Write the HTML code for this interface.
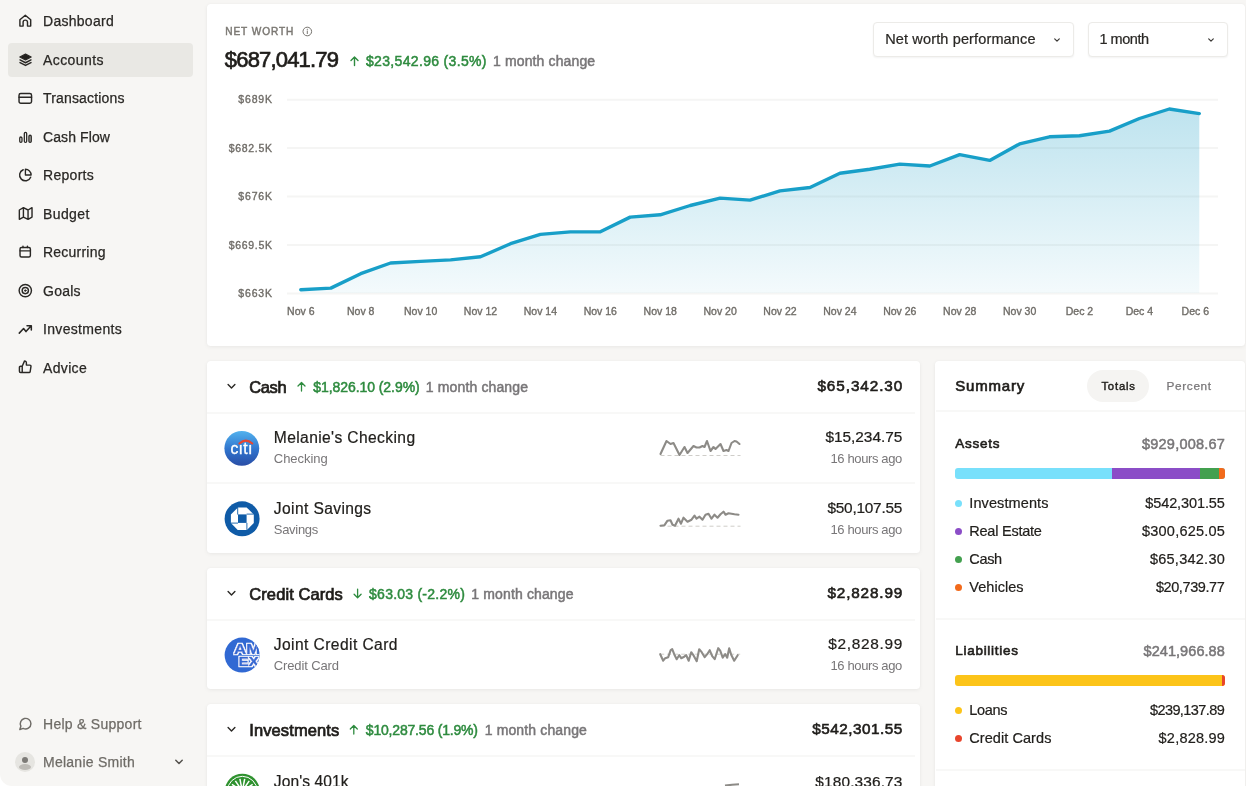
<!DOCTYPE html>
<html lang="en">
<head>
<meta charset="utf-8">
<title>Accounts</title>
<style>
*{box-sizing:border-box;margin:0;padding:0}
html,body{width:1246px;height:786px;overflow:hidden;background:#fff}
body{font-family:"Liberation Sans",Arial,sans-serif;color:#22201d;position:relative}
#app{will-change:transform;position:absolute;left:0;top:0;width:1246px;height:786px;background:#f7f6f4;border-bottom-left-radius:12px;overflow:hidden}
.t{position:absolute;white-space:nowrap;line-height:20px}
.m{-webkit-text-stroke:0.35px currentColor}
.card{position:absolute;background:#fff;border-radius:3.5px;box-shadow:0 1px 4px rgba(0,0,0,.06),0 0 1px rgba(0,0,0,.05)}
.nav{position:absolute;left:43px;font-size:14px;letter-spacing:.25px;line-height:20px;color:#2a2825;white-space:nowrap;-webkit-text-stroke:0.3px currentColor}
.ico{position:absolute;left:17px;width:17px;height:17px}
.ico svg{display:block;overflow:visible;width:17px;height:17px;fill:none;stroke:#2a2825;stroke-width:1.5;stroke-linecap:round;stroke-linejoin:round}
.sel{position:absolute;left:8px;top:43px;width:185px;height:34px;background:#e9e8e4;border-radius:4px}
.hr{position:absolute;height:2px;background:#f8f8f7}
.g{color:#2e8b3f}
.gr{color:#787678}
.r{text-align:right}
.ax{font-family:"Liberation Sans",Arial,sans-serif;font-size:10.5px;fill:#6f6c67;stroke:#6f6c67;stroke-width:.35px}
</style>
</head>
<body>
<div id="app">

<!-- SIDEBAR -->
<div class="sel"></div>
<div class="ico" style="top:12px;left:16px"><svg viewBox="-0.75 -0.19 16 16"><g transform="translate(8 8) scale(0.94) translate(-8 -8)" stroke-width="1.44"><path d="M2.6 7.1 8 2.6l5.4 4.5v6.3h-3.2V9.6a2.2 2.2 0 0 0-4.4 0v3.8H2.6z"/></g></svg></div>
<div class="t " style="top:11.4px;font-size:14px;line-height:20px;left:43px;letter-spacing:0.276px;color:#2a2825;-webkit-text-stroke:0.25px currentColor;">Dashboard</div>
<div class="ico" style="top:51px;left:17px"><svg viewBox="-0.00 -0.28 16 16"><g transform="translate(8 8) scale(0.92) translate(-8 -8)" stroke-width="1.47"><path d="M8 2.2 2.2 5.2 8 8.2l5.8-3z" fill="#22201d" stroke-width="1.2"/><path d="M2.4 8.1 8 11l5.6-2.9M2.4 10.9 8 13.8l5.6-2.9" stroke-width="1.5"/></g></svg></div>
<div class="t " style="top:49.9px;font-size:14px;line-height:20px;left:43px;letter-spacing:0.416px;color:#2a2825;-webkit-text-stroke:0.25px currentColor;">Accounts</div>
<div class="ico" style="top:89px;left:16px"><svg viewBox="-0.75 -0.75 16 16"><g transform="translate(8 8) scale(0.92) translate(-8 -8)" stroke-width="1.47"><rect x="1.6" y="3" width="12.8" height="10" rx="1.8"/><path d="M1.6 6.9h12.8"/></g></svg></div>
<div class="t " style="top:88.4px;font-size:14px;line-height:20px;left:43px;letter-spacing:0.161px;color:#2a2825;-webkit-text-stroke:0.25px currentColor;">Transactions</div>
<div class="ico" style="top:128px;left:17px"><svg viewBox="-0.00 -0.38 16 16"><g transform="translate(8 8) scale(0.92) translate(-8 -8)" stroke-width="1.47"><rect x="2.1" y="8.1" width="2.3" height="5.6" rx="1.15" stroke-width="1.3"/><rect x="6.8" y="3.3" width="2.4" height="10.4" rx="1.2" stroke-width="1.3"/><rect x="11.5" y="6.3" width="2.4" height="7.4" rx="1.2" stroke-width="1.3" fill="#b9b7b3"/></g></svg></div>
<div class="t " style="top:126.9px;font-size:14px;line-height:20px;left:43px;letter-spacing:0.096px;color:#2a2825;-webkit-text-stroke:0.25px currentColor;">Cash Flow</div>
<div class="ico" style="top:166px;left:16px"><svg viewBox="-0.85 -0.47 16 16"><g transform="translate(8 8) scale(0.9) translate(-8 -8)" stroke-width="1.50"><path d="M13.5 10.3A6 6 0 1 1 5.7 2.5"/><path d="M14 8A6 6 0 0 0 8 2v6z" stroke-width="1.4"/></g></svg></div>
<div class="t " style="top:165.4px;font-size:14px;line-height:20px;left:43px;letter-spacing:0.297px;color:#2a2825;-webkit-text-stroke:0.25px currentColor;">Reports</div>
<div class="ico" style="top:205px;left:16px"><svg viewBox="-0.85 -0.00 16 16"><g transform="translate(8 8) scale(0.89) translate(-8 -8)" stroke-width="1.52"><path d="M1.6 4.3v9.9l4.3-2.4 4.9 2.4 4.2-2.4V1.9l-4.2 2.4-4.9-2.4zM5.9 1.9v9.9M10.8 4.3v9.9" stroke-width="1.5"/></g></svg></div>
<div class="t " style="top:203.9px;font-size:14px;line-height:20px;left:43px;letter-spacing:0.386px;color:#2a2825;-webkit-text-stroke:0.25px currentColor;">Budget</div>
<div class="ico" style="top:243px;left:16px"><svg viewBox="-0.66 -0.28 16 16"><g transform="translate(8 8) scale(0.87) translate(-8 -8)" stroke-width="1.55"><rect x="2.4" y="3.3" width="11.2" height="10.4" rx="1.6"/><path d="M2.4 7h11.2M5.6 1.9v1.4M10.4 1.9v1.4"/></g></svg></div>
<div class="t " style="top:242.4px;font-size:14px;line-height:20px;left:43px;letter-spacing:0.226px;color:#2a2825;-webkit-text-stroke:0.25px currentColor;">Recurring</div>
<div class="ico" style="top:282px;left:16px"><svg viewBox="-0.75 -0.09 16 16"><g transform="translate(8 8) scale(0.95) translate(-8 -8)" stroke-width="1.42"><circle cx="8" cy="8" r="6.1"/><circle cx="8" cy="8" r="3.1"/><circle cx="8" cy="8" r=".8" fill="#22201d" stroke-width=".8"/></g></svg></div>
<div class="t " style="top:280.9px;font-size:14px;line-height:20px;left:43px;letter-spacing:0.257px;color:#2a2825;-webkit-text-stroke:0.25px currentColor;">Goals</div>
<div class="ico" style="top:320px;left:16px"><svg viewBox="-0.75 -0.56 16 16"><g transform="translate(8 8) scale(0.9) translate(-8 -8)" stroke-width="1.50"><path d="M1.7 12.2 6.2 7.4l2.5 3.2 5.5-6M9.8 4.5h4.5v4.5" stroke-width="1.6"/></g></svg></div>
<div class="t " style="top:319.4px;font-size:14px;line-height:20px;left:43px;letter-spacing:0.332px;color:#2a2825;-webkit-text-stroke:0.25px currentColor;">Investments</div>
<div class="ico" style="top:358px;left:16px"><svg viewBox="-0.66 -0.56 16 16"><g transform="translate(8 8) scale(0.85) translate(-8 -8)" stroke-width="1.59"><path d="M9.3 6V3.3a2 2 0 0 0-2-2L4.7 7.3v6.9h7.5a1.3 1.3 0 0 0 1.3-1.1l.9-5.6a1.3 1.3 0 0 0-1.3-1.5zM4.7 14.2H2.9a1.3 1.3 0 0 1-1.3-1.3V8.6a1.3 1.3 0 0 1 1.3-1.3h1.8" transform="translate(0 -.2)"/></g></svg></div>
<div class="t " style="top:357.9px;font-size:14px;line-height:20px;left:43px;letter-spacing:0.336px;color:#2a2825;-webkit-text-stroke:0.25px currentColor;">Advice</div>
<div class="ico" style="top:715px;left:17px"><svg viewBox="-0.00 -0.47 16 16" style="stroke:#6f6c67"><path d="M13.1 7.7a5 5 0 0 1-7.3 4.45L2.7 13.1l.95-3.1A5 5 0 1 1 13.1 7.7z" stroke-width="1.4"/></svg></div>
<div class="t " style="top:714px;font-size:14px;line-height:20px;left:43px;letter-spacing:0.273px;color:#6f6c67;-webkit-text-stroke:0.25px currentColor;">Help &amp; Support</div>
<div style="position:absolute;left:15px;top:752px;width:20px;height:20px;border-radius:50%;background:#e6e5e1;overflow:hidden"><div style="position:absolute;left:7px;top:4.5px;width:6px;height:6px;border-radius:50%;background:#7d7b77"></div><div style="position:absolute;left:4px;top:12px;width:12px;height:6px;border-radius:50%;background:#bdbbb6"></div></div>
<div class="t " style="top:752px;font-size:14px;line-height:20px;left:43px;letter-spacing:0.25px;color:#6f6c67;-webkit-text-stroke:0.25px currentColor;">Melanie Smith</div>
<svg style="position:absolute;left:173px;top:757px;overflow:visible" width="12" height="10" viewBox="-0.00 -0.00 12 10" fill="none" stroke="#55524e" stroke-width="1.5" stroke-linecap="round" stroke-linejoin="round"><path d="M2.8 3.3 6 6.5 9.2 3.3"/></svg>

<!-- TOP CARD -->
<div class="card" style="left:207px;top:4px;width:1038px;height:342px"></div>
<div class="t " style="top:22px;font-size:10.1px;line-height:20px;left:225.3px;letter-spacing:0.902px;color:#7b7873;-webkit-text-stroke:0.45px currentColor;">NET WORTH</div>
<svg style="position:absolute;left:301px;top:26px;overflow:visible" width="11" height="11" viewBox="-0.80 -0.00 11 11" fill="none" stroke="#77746f" stroke-width="1"><circle cx="5.5" cy="5.5" r="4.3"/><path d="M5.5 5v2.6" stroke-linecap="round"/><circle cx="5.5" cy="3.4" r=".4" fill="#77746f" stroke-width=".5"/></svg>
<div class="t " style="top:47.6px;font-size:22px;line-height:24px;left:224.8px;letter-spacing:-0.814px;color:#1f1d1a;-webkit-text-stroke:0.7px currentColor;">$687,041.79</div>
<svg style="position:absolute;left:348px;top:54px;overflow:visible" width="12" height="14" viewBox="-0.50 -0.00 12 14" fill="none" stroke="#2e8b3f" stroke-width="1.4" stroke-linecap="round" stroke-linejoin="round"><path d="M6 11.6V3M2.5 6.5 6 3 9.5 6.5"/></svg>
<div class="t " style="top:51px;font-size:14px;line-height:20px;left:366px;letter-spacing:0.332px;color:#2e8b3f;-webkit-text-stroke:0.5px currentColor;">$23,542.96 (3.5%)</div>
<div class="t " style="top:51px;font-size:14px;line-height:20px;left:493px;letter-spacing:0.13px;color:#787678;-webkit-text-stroke:0.5px currentColor;">1 month change</div>
<div style="position:absolute;left:873px;top:22px;width:201px;height:35px;border:1px solid #ecebe8;border-radius:4px;background:#fff;box-shadow:0 1px 2px rgba(0,0,0,.05)"></div>
<div class="t " style="top:29.3px;font-size:14.5px;line-height:20px;left:885.2px;letter-spacing:0.141px;color:#2a2825;-webkit-text-stroke:0.22px currentColor;">Net worth performance</div>
<svg style="position:absolute;left:1052px;top:35px;overflow:visible" width="10" height="10" viewBox="-0.00 -0.00 10 10" fill="none" stroke="#3a3835" stroke-width="1.2" stroke-linecap="round" stroke-linejoin="round"><path d="M2.7 3.9 5 6.2l2.3-2.3"/></svg>
<div style="position:absolute;left:1088px;top:22px;width:140px;height:35px;border:1px solid #ecebe8;border-radius:4px;background:#fff;box-shadow:0 1px 2px rgba(0,0,0,.05)"></div>
<div class="t " style="top:29.3px;font-size:14.5px;line-height:20px;left:1099.4px;letter-spacing:-0.449px;color:#2a2825;-webkit-text-stroke:0.22px currentColor;">1 month</div>
<svg style="position:absolute;left:1206px;top:35px;overflow:visible" width="10" height="10" viewBox="-0.00 -0.00 10 10" fill="none" stroke="#3a3835" stroke-width="1.2" stroke-linecap="round" stroke-linejoin="round"><path d="M2.7 3.9 5 6.2l2.3-2.3"/></svg>
<svg style="position:absolute;left:0;top:0" width="1246" height="350" viewBox="0 0 1246 350"><defs><linearGradient id="ag" x1="0" y1="100" x2="0" y2="293" gradientUnits="userSpaceOnUse"><stop offset="0" stop-color="#1e9fc6" stop-opacity=".30"/><stop offset="1" stop-color="#1e9fc6" stop-opacity=".05"/></linearGradient></defs><path d="M287 99.7H1218" stroke="#f5f5f4" stroke-width="2"/><path d="M287 148.1H1218" stroke="#f5f5f4" stroke-width="2"/><path d="M287 196.6H1218" stroke="#f5f5f4" stroke-width="2"/><path d="M287 245.0H1218" stroke="#f5f5f4" stroke-width="2"/><path d="M287 293.5H1218" stroke="#f5f5f4" stroke-width="2"/><path d="M300.8 289.7 L330.8 288.1 L360.7 273.7 L390.6 263.0 L420.6 261.4 L450.6 259.9 L480.5 256.8 L510.5 243.7 L540.4 234.4 L570.4 231.9 L600.3 231.8 L630.2 217.1 L660.2 214.8 L690.2 205.5 L720.1 198.1 L750.0 200.1 L780.0 190.9 L810.0 187.5 L839.9 173.2 L869.8 169.3 L899.8 164.1 L929.8 166.0 L959.7 154.7 L989.7 160.4 L1019.6 143.9 L1049.5 136.8 L1079.5 135.7 L1109.5 131.1 L1139.4 118.5 L1169.3 109.0 L1199.3 113.6 L1199.3 293 L300.8 293 Z" fill="url(#ag)"/><path d="M300.8 289.7 L330.8 288.1 L360.7 273.7 L390.6 263.0 L420.6 261.4 L450.6 259.9 L480.5 256.8 L510.5 243.7 L540.4 234.4 L570.4 231.9 L600.3 231.8 L630.2 217.1 L660.2 214.8 L690.2 205.5 L720.1 198.1 L750.0 200.1 L780.0 190.9 L810.0 187.5 L839.9 173.2 L869.8 169.3 L899.8 164.1 L929.8 166.0 L959.7 154.7 L989.7 160.4 L1019.6 143.9 L1049.5 136.8 L1079.5 135.7 L1109.5 131.1 L1139.4 118.5 L1169.3 109.0 L1199.3 113.6" fill="none" stroke="#189fc8" stroke-width="3.4" stroke-linejoin="round" stroke-linecap="round"/><text x="272.83" y="103.3" text-anchor="end" class="ax" letter-spacing="0.834">$689K</text><text x="272.70" y="151.7" text-anchor="end" class="ax" letter-spacing="0.697">$682.5K</text><text x="272.83" y="200.2" text-anchor="end" class="ax" letter-spacing="0.834">$676K</text><text x="272.70" y="248.6" text-anchor="end" class="ax" letter-spacing="0.697">$669.5K</text><text x="272.83" y="297.1" text-anchor="end" class="ax" letter-spacing="0.834">$663K</text><text x="300.8" y="315" text-anchor="middle" class="ax">Nov 6</text><text x="360.7" y="315" text-anchor="middle" class="ax">Nov 8</text><text x="420.6" y="315" text-anchor="middle" class="ax">Nov 10</text><text x="480.5" y="315" text-anchor="middle" class="ax">Nov 12</text><text x="540.4" y="315" text-anchor="middle" class="ax">Nov 14</text><text x="600.3" y="315" text-anchor="middle" class="ax">Nov 16</text><text x="660.2" y="315" text-anchor="middle" class="ax">Nov 18</text><text x="720.1" y="315" text-anchor="middle" class="ax">Nov 20</text><text x="780.0" y="315" text-anchor="middle" class="ax">Nov 22</text><text x="839.9" y="315" text-anchor="middle" class="ax">Nov 24</text><text x="899.8" y="315" text-anchor="middle" class="ax">Nov 26</text><text x="959.7" y="315" text-anchor="middle" class="ax">Nov 28</text><text x="1019.6" y="315" text-anchor="middle" class="ax">Nov 30</text><text x="1079.5" y="315" text-anchor="middle" class="ax">Dec 2</text><text x="1139.4" y="315" text-anchor="middle" class="ax">Dec 4</text><text x="1195.3" y="315" text-anchor="middle" class="ax">Dec 6</text></svg>

<!-- ACCOUNT CARDS -->
<div class="card" style="left:207px;top:361px;width:713px;height:192px"></div>
<div class="card" style="left:207px;top:568px;width:713px;height:121px"></div>
<div class="card" style="left:207px;top:704px;width:713px;height:120px"></div>
<svg style="position:absolute;left:225px;top:381px;overflow:visible" width="12" height="10" viewBox="-0.50 -0.50 12 10" fill="none" stroke="#2a2825" stroke-width="1.4" stroke-linecap="round" stroke-linejoin="round"><path d="M2.6 3.1 6 6.5 9.4 3.1"/></svg>
<div class="t " style="top:376.6px;font-size:16.5px;line-height:20px;left:249.3px;letter-spacing:-0.406px;color:#1f1d1a;-webkit-text-stroke:0.72px currentColor;">Cash</div>
<svg style="position:absolute;left:295px;top:379px;overflow:visible" width="12" height="14" viewBox="-0.50 -0.50 12 14" fill="none" stroke="#2e8b3f" stroke-width="1.3" stroke-linecap="round" stroke-linejoin="round"><path d="M6 11.6V3M2.5 6.5 6 3 9.5 6.5"/></svg>
<div class="t " style="top:376.5px;font-size:14px;line-height:20px;left:313.2px;letter-spacing:-0.06px;color:#2e8b3f;-webkit-text-stroke:0.5px currentColor;">$1,826.10 (2.9%)</div>
<div class="t " style="top:376.5px;font-size:14px;line-height:20px;left:425.8px;letter-spacing:0.138px;color:#787678;-webkit-text-stroke:0.5px currentColor;">1 month change</div>
<div class="t " style="top:376px;font-size:15.3px;line-height:20px;right:342.78px;letter-spacing:0.925px;color:#1f1d1a;-webkit-text-stroke:0.62px currentColor;">$65,342.30</div>
<div class="hr" style="left:207px;width:708px;top:411.5px"></div>
<svg style="position:absolute;left:224px;top:430px;overflow:visible" width="36" height="36" viewBox="-0.50 -0.00 36 36"><defs><linearGradient id="cg" x1="0" y1="0" x2="0" y2="1"><stop offset="0" stop-color="#52b2ee"/><stop offset=".55" stop-color="#2f72cc"/><stop offset="1" stop-color="#2a4ea6"/></linearGradient></defs><circle cx="17.3" cy="18.3" r="17.4" fill="url(#cg)"/><path d="M14.9 13.5Q21.3 7.8 27.8 13.5" fill="none" stroke="#e8452f" stroke-width="2.1" stroke-linecap="round"/><clipPath id="cc"><rect x="0" y="14.7" width="36" height="22"/><rect x="18.3" y="0" width="5.6" height="15"/><rect x="0" y="0" width="14.3" height="15"/></clipPath><text x="6" y="23.6" clip-path="url(#cc)" font-family="Liberation Sans,Arial,sans-serif" font-size="15.6" fill="#fff" stroke="#fff" stroke-width=".35" letter-spacing=".8">citi</text></svg>
<div class="t " style="top:428px;font-size:15.6px;line-height:20px;left:273.8px;letter-spacing:0.384px;color:#22201d;-webkit-text-stroke:0.2px currentColor;">Melanie's Checking</div>
<div class="t " style="top:448.5px;font-size:13px;line-height:20px;left:273.8px;letter-spacing:-0.028px;color:#787678;">Checking</div>
<div class="t " style="top:427.4px;font-size:15.4px;line-height:20px;right:343.72px;letter-spacing:-0.02px;color:#22201d;-webkit-text-stroke:0.22px currentColor;">$15,234.75</div>
<div class="t " style="top:448.8px;font-size:13px;line-height:20px;right:344.07px;letter-spacing:-0.372px;color:#787678;">16 hours ago</div>
<svg style="position:absolute;left:655px;top:434px;overflow:visible" width="90" height="30" viewBox="-0.50 -0.00 90 30" fill="none"><path d="M5 21.5H85" stroke="#cfcdc9" stroke-width="1" stroke-dasharray="4 3"/><path d="M5.0 20.0 L11.0 7.0 L15.0 10.0 L18.0 9.0 L24.0 21.0 L29.0 13.0 L32.0 19.0 L38.0 12.0 L41.0 13.5 L44.0 13.5 L47.0 12.0 L49.0 13.0 L51.5 7.0 L55.0 17.0 L58.0 13.0 L60.0 15.0 L65.0 10.0 L68.0 17.0 L71.0 16.0 L73.0 17.0 L76.0 9.0 L79.0 7.0 L81.0 7.5 L84.0 10.0" stroke="#8d8b87" stroke-width="2.1" stroke-linejoin="round" stroke-linecap="round"/></svg>
<div class="hr" style="left:207px;width:708px;top:482.3px"></div>
<svg style="position:absolute;left:224px;top:501px;overflow:visible" width="36" height="36" viewBox="-0.50 -0.00 36 36"><circle cx="17.6" cy="17.8" r="17.5" fill="#0f5ba7"/><path d="M13.5 6.4h8.6l7.2 7v8.5l-6.9 7h-9.2l-6.8-7v-8.5z" fill="#fff"/><rect x="13.5" y="13.4" width="8.6" height="8.5" fill="#0f5ba7"/><path d="M13.2 6.4v7.2M22.1 13.1h7.2M22.4 21.9v7M6.4 22.1h7.1" stroke="#0f5ba7" stroke-width=".9" fill="none"/></svg>
<div class="t " style="top:499px;font-size:15.6px;line-height:20px;left:273.8px;letter-spacing:0.385px;color:#22201d;-webkit-text-stroke:0.2px currentColor;">Joint Savings</div>
<div class="t " style="top:519.5px;font-size:13px;line-height:20px;left:273.8px;letter-spacing:-0.292px;color:#787678;">Savings</div>
<div class="t " style="top:498.4px;font-size:15.4px;line-height:20px;right:343.94px;letter-spacing:-0.242px;color:#22201d;-webkit-text-stroke:0.22px currentColor;">$50,107.55</div>
<div class="t " style="top:519.8px;font-size:13px;line-height:20px;right:344.07px;letter-spacing:-0.372px;color:#787678;">16 hours ago</div>
<svg style="position:absolute;left:655px;top:504px;overflow:visible" width="90" height="30" viewBox="-0.50 -0.70 90 30" fill="none"><path d="M5 21.5H85" stroke="#cfcdc9" stroke-width="1" stroke-dasharray="4 3"/><path d="M5.0 21.0 L9.0 20.5 L12.0 16.0 L15.0 15.5 L17.0 20.0 L19.5 21.0 L23.0 14.0 L25.5 19.0 L28.0 13.0 L32.0 17.0 L36.0 15.0 L39.0 11.0 L41.0 14.0 L44.0 12.0 L47.0 15.0 L50.0 10.0 L53.0 9.0 L56.0 14.0 L59.0 10.0 L62.0 13.0 L65.0 9.5 L68.0 7.0 L70.0 10.0 L73.0 8.5 L76.0 9.0 L79.0 9.5 L83.0 10.0" stroke="#8d8b87" stroke-width="2.1" stroke-linejoin="round" stroke-linecap="round"/></svg>
<svg style="position:absolute;left:225px;top:588px;overflow:visible" width="12" height="10" viewBox="-0.50 -0.50 12 10" fill="none" stroke="#2a2825" stroke-width="1.4" stroke-linecap="round" stroke-linejoin="round"><path d="M2.6 3.1 6 6.5 9.4 3.1"/></svg>
<div class="t " style="top:583.6px;font-size:16.5px;line-height:20px;left:249.3px;letter-spacing:0.081px;color:#1f1d1a;-webkit-text-stroke:0.72px currentColor;">Credit Cards</div>
<svg style="position:absolute;left:351px;top:586px;overflow:visible" width="12" height="14" viewBox="-0.60 -0.50 12 14" fill="none" stroke="#2e8b3f" stroke-width="1.3" stroke-linecap="round" stroke-linejoin="round"><path d="M6 2.6v8.6M2.5 7.7 6 11.2 9.5 7.7"/></svg>
<div class="t " style="top:583.5px;font-size:14px;line-height:20px;left:369.1px;letter-spacing:0.238px;color:#2e8b3f;-webkit-text-stroke:0.5px currentColor;">$63.03 (-2.2%)</div>
<div class="t " style="top:583.5px;font-size:14px;line-height:20px;left:471.3px;letter-spacing:0.138px;color:#787678;-webkit-text-stroke:0.5px currentColor;">1 month change</div>
<div class="t " style="top:583px;font-size:15.3px;line-height:20px;right:342.85px;letter-spacing:0.854px;color:#1f1d1a;-webkit-text-stroke:0.62px currentColor;">$2,828.99</div>
<div class="hr" style="left:207px;width:708px;top:618.5px"></div>
<svg style="position:absolute;left:224px;top:637px;overflow:visible" width="36" height="36" viewBox="-0.50 -0.00 36 36"><defs><clipPath id="ac"><circle cx="17.6" cy="18.1" r="17.5"/></clipPath><filter id="amf" x="-10%" y="-20%" width="120%" height="140%"><feMorphology in="SourceAlpha" operator="dilate" radius="1.1" result="d"/><feFlood flood-color="#fff"/><feComposite in2="d" operator="in" result="w"/><feMerge><feMergeNode in="w"/><feMergeNode in="SourceGraphic"/></feMerge></filter></defs><circle cx="17.6" cy="18.1" r="17.5" fill="#3169d3"/><g clip-path="url(#ac)"><g filter="url(#amf)" font-family="Liberation Sans,Arial,sans-serif" font-weight="700" fill="#3169d3" stroke="#3169d3" stroke-width=".5" stroke-linejoin="round"><text transform="translate(9.6 17.3) scale(1.22 1)" font-size="13.8">AM</text><text transform="translate(14.3 28.7) scale(1.18 1)" font-size="12.6">EX</text></g></g></svg>
<div class="t " style="top:635px;font-size:15.6px;line-height:20px;left:273.8px;letter-spacing:0.416px;color:#22201d;-webkit-text-stroke:0.2px currentColor;">Joint Credit Card</div>
<div class="t " style="top:655.5px;font-size:13px;line-height:20px;left:273.8px;letter-spacing:-0.137px;color:#787678;">Credit Card</div>
<div class="t " style="top:634.4px;font-size:15.4px;line-height:20px;right:343.00px;letter-spacing:0.699px;color:#22201d;-webkit-text-stroke:0.22px currentColor;">$2,828.99</div>
<div class="t " style="top:655.8px;font-size:13px;line-height:20px;right:344.07px;letter-spacing:-0.372px;color:#787678;">16 hours ago</div>
<svg style="position:absolute;left:655px;top:641px;overflow:visible" width="90" height="30" viewBox="-0.20 -0.20 90 30" fill="none"><path d="M5 13H85" stroke="#cfcdc9" stroke-width="1" stroke-dasharray="4 3"/><path d="M5.0 13.0 L8.0 19.5 L10.0 17.0 L13.0 16.0 L15.5 9.0 L17.0 8.0 L19.0 13.0 L21.5 18.0 L24.0 14.0 L26.0 17.0 L29.0 15.5 L31.0 14.0 L33.5 19.5 L36.0 11.0 L38.5 14.5 L41.5 20.0 L44.0 8.0 L46.5 11.0 L49.5 16.0 L52.0 13.0 L54.5 9.0 L57.0 15.0 L59.5 18.0 L63.0 7.0 L65.0 9.5 L67.5 16.5 L70.0 13.0 L72.0 16.5 L74.0 7.0 L76.0 13.5 L79.0 19.5 L82.5 14.0" stroke="#8d8b87" stroke-width="2.1" stroke-linejoin="round" stroke-linecap="round"/></svg>
<svg style="position:absolute;left:225px;top:724px;overflow:visible" width="12" height="10" viewBox="-0.50 -0.50 12 10" fill="none" stroke="#2a2825" stroke-width="1.4" stroke-linecap="round" stroke-linejoin="round"><path d="M2.6 3.1 6 6.5 9.4 3.1"/></svg>
<div class="t " style="top:719.6px;font-size:16.5px;line-height:20px;left:249.3px;letter-spacing:0.095px;color:#1f1d1a;-webkit-text-stroke:0.72px currentColor;">Investments</div>
<svg style="position:absolute;left:347px;top:722px;overflow:visible" width="12" height="14" viewBox="-0.80 -0.50 12 14" fill="none" stroke="#2e8b3f" stroke-width="1.3" stroke-linecap="round" stroke-linejoin="round"><path d="M6 11.6V3M2.5 6.5 6 3 9.5 6.5"/></svg>
<div class="t " style="top:719.5px;font-size:14px;line-height:20px;left:365.8px;letter-spacing:-0.187px;color:#2e8b3f;-webkit-text-stroke:0.5px currentColor;">$10,287.56 (1.9%)</div>
<div class="t " style="top:719.5px;font-size:14px;line-height:20px;left:484.7px;letter-spacing:0.138px;color:#787678;-webkit-text-stroke:0.5px currentColor;">1 month change</div>
<div class="t " style="top:719px;font-size:15.3px;line-height:20px;right:343.20px;letter-spacing:0.502px;color:#1f1d1a;-webkit-text-stroke:0.62px currentColor;">$542,301.55</div>
<div class="hr" style="left:207px;width:708px;top:754.5px"></div>
<svg style="position:absolute;left:224px;top:773px;overflow:visible" width="36" height="36" viewBox="-0.50 -0.00 36 36"><circle cx="17.8" cy="18.2" r="17.5" fill="#2f922f"/><circle cx="17.8" cy="18.2" r="14.9" fill="none" stroke="#fff" stroke-width="1"/><g stroke="#fff" stroke-width="1.5"><path d="M17.8 18.2L30.1 20.6"/><path d="M17.8 18.2L28.2 25.1"/><path d="M17.8 18.2L24.7 28.6"/><path d="M17.8 18.2L20.2 30.5"/><path d="M17.8 18.2L15.4 30.5"/><path d="M17.8 18.2L10.9 28.6"/><path d="M17.8 18.2L7.4 25.1"/><path d="M17.8 18.2L5.5 20.6"/><path d="M17.8 18.2L5.5 15.8"/><path d="M17.8 18.2L7.4 11.3"/><path d="M17.8 18.2L10.9 7.8"/><path d="M17.8 18.2L15.4 5.9"/><path d="M17.8 18.2L20.2 5.9"/><path d="M17.8 18.2L24.7 7.8"/><path d="M17.8 18.2L28.2 11.3"/><path d="M17.8 18.2L30.1 15.8"/></g></svg>
<div class="t " style="top:772.3px;font-size:15.6px;line-height:20px;left:273.8px;letter-spacing:0.09px;color:#22201d;-webkit-text-stroke:0.2px currentColor;">Jon's 401k</div>
<div class="t " style="top:792.8px;font-size:13px;line-height:20px;left:273.8px;letter-spacing:0.17px;color:#787678;">401k</div>
<div class="t " style="top:771.6999999999999px;font-size:15.4px;line-height:20px;right:343.56px;letter-spacing:0.136px;color:#22201d;-webkit-text-stroke:0.22px currentColor;">$180,336.73</div>
<div class="t " style="top:793.0999999999999px;font-size:13px;line-height:20px;right:344.07px;letter-spacing:-0.372px;color:#787678;">16 hours ago</div>
<svg style="position:absolute;left:654px;top:775px;overflow:visible" width="90" height="30" viewBox="-0.00 -0.00 90 30" fill="none"><path d="M71 10.6 78 9.7 85 9.3" stroke="#8d8b87" stroke-width="2.1"/></svg>

<!-- SUMMARY -->
<div class="card" style="left:935px;top:361px;width:310px;height:460px"></div>
<div class="t " style="top:375.6px;font-size:15px;line-height:20px;left:955.3px;letter-spacing:0.804px;color:#1f1d1a;-webkit-text-stroke:0.65px currentColor;">Summary</div>
<div style="position:absolute;left:1087px;top:370px;width:62px;height:31.5px;border-radius:16px;background:#f5f4f2"></div>
<div class="t " style="top:376.4px;font-size:11.3px;line-height:20px;left:1101.4px;letter-spacing:0.816px;color:#22201d;-webkit-text-stroke:0.42px currentColor;">Totals</div>
<div class="t " style="top:376.4px;font-size:11.8px;line-height:20px;left:1166.6px;letter-spacing:0.639px;color:#787678;-webkit-text-stroke:0.25px currentColor;">Percent</div>
<div class="hr" style="left:936px;width:309px;top:410.4px"></div>
<div class="t " style="top:434.2px;font-size:13.5px;line-height:20px;left:955.3px;letter-spacing:0.737px;color:#1f1d1a;-webkit-text-stroke:0.6px currentColor;">Assets</div>
<div class="t " style="top:433.5px;font-size:14.5px;line-height:20px;right:20.98px;letter-spacing:0.216px;color:#787678;-webkit-text-stroke:0.5px currentColor;">$929,008.67</div>
<div style="position:absolute;left:955px;top:468px;width:270px;height:10.5px;border-radius:3px;overflow:hidden;background:#78e0fb"><div style="position:absolute;left:157px;top:0;width:88.5px;height:11px;background:#8b4dc7"></div><div style="position:absolute;left:245px;top:0;width:19px;height:11px;background:#43a04f"></div><div style="position:absolute;left:264px;top:0;width:6px;height:11px;background:#f26a1b"></div></div>
<div style="position:absolute;left:955px;top:499.5px;width:7px;height:7px;border-radius:50%;background:#78e0fb"></div>
<div class="t " style="top:492.5px;font-size:14.5px;line-height:20px;left:969.3px;letter-spacing:0.103px;color:#22201d;-webkit-text-stroke:0.2px currentColor;">Investments</div>
<div class="t " style="top:492.5px;font-size:14.5px;line-height:20px;right:21.31px;letter-spacing:-0.114px;color:#22201d;-webkit-text-stroke:0.2px currentColor;">$542,301.55</div>
<div style="position:absolute;left:955px;top:527.5px;width:7px;height:7px;border-radius:50%;background:#8b4dc7"></div>
<div class="t " style="top:520.5px;font-size:14.5px;line-height:20px;left:969.3px;letter-spacing:-0.236px;color:#22201d;-webkit-text-stroke:0.2px currentColor;">Real Estate</div>
<div class="t " style="top:520.5px;font-size:14.5px;line-height:20px;right:20.98px;letter-spacing:0.216px;color:#22201d;-webkit-text-stroke:0.2px currentColor;">$300,625.05</div>
<div style="position:absolute;left:955px;top:555.5px;width:7px;height:7px;border-radius:50%;background:#43a04f"></div>
<div class="t " style="top:548.5px;font-size:14.5px;line-height:20px;left:969.3px;letter-spacing:-0.35px;color:#22201d;-webkit-text-stroke:0.2px currentColor;">Cash</div>
<div class="t " style="top:548.5px;font-size:14.5px;line-height:20px;right:20.94px;letter-spacing:0.259px;color:#22201d;-webkit-text-stroke:0.2px currentColor;">$65,342.30</div>
<div style="position:absolute;left:955px;top:583.5px;width:7px;height:7px;border-radius:50%;background:#f26a1b"></div>
<div class="t " style="top:576.5px;font-size:14.5px;line-height:20px;left:969.3px;letter-spacing:0.042px;color:#22201d;-webkit-text-stroke:0.2px currentColor;">Vehicles</div>
<div class="t " style="top:576.5px;font-size:14.5px;line-height:20px;right:21.61px;letter-spacing:-0.408px;color:#22201d;-webkit-text-stroke:0.2px currentColor;">$20,739.77</div>
<div class="hr" style="left:936px;width:309px;top:617.5px"></div>
<div class="t " style="top:641.2px;font-size:13.5px;line-height:20px;left:955.3px;letter-spacing:0.707px;color:#1f1d1a;-webkit-text-stroke:0.6px currentColor;">Liabilities</div>
<div class="t " style="top:640.5px;font-size:14.5px;line-height:20px;right:21.13px;letter-spacing:0.066px;color:#787678;-webkit-text-stroke:0.5px currentColor;">$241,966.88</div>
<div style="position:absolute;left:955px;top:675px;width:270px;height:10.5px;border-radius:3px;overflow:hidden;background:#fcc419"><div style="position:absolute;left:267px;top:0;width:3px;height:11px;background:#e8452c"></div></div>
<div style="position:absolute;left:955px;top:706.5px;width:7px;height:7px;border-radius:50%;background:#fcc419"></div>
<div class="t " style="top:699.5px;font-size:14.5px;line-height:20px;left:969.3px;letter-spacing:-0.327px;color:#22201d;-webkit-text-stroke:0.2px currentColor;">Loans</div>
<div class="t " style="top:699.5px;font-size:14.5px;line-height:20px;right:21.77px;letter-spacing:-0.574px;color:#22201d;-webkit-text-stroke:0.2px currentColor;">$239,137.89</div>
<div style="position:absolute;left:955px;top:734.5px;width:7px;height:7px;border-radius:50%;background:#e8452c"></div>
<div class="t " style="top:727.5px;font-size:14.5px;line-height:20px;left:969.3px;letter-spacing:0.065px;color:#22201d;-webkit-text-stroke:0.2px currentColor;">Credit Cards</div>
<div class="t " style="top:727.5px;font-size:14.5px;line-height:20px;right:20.99px;letter-spacing:0.212px;color:#22201d;-webkit-text-stroke:0.2px currentColor;">$2,828.99</div>
<div class="hr" style="left:936px;width:309px;top:768.5px"></div>

</div>
</body>
</html>
